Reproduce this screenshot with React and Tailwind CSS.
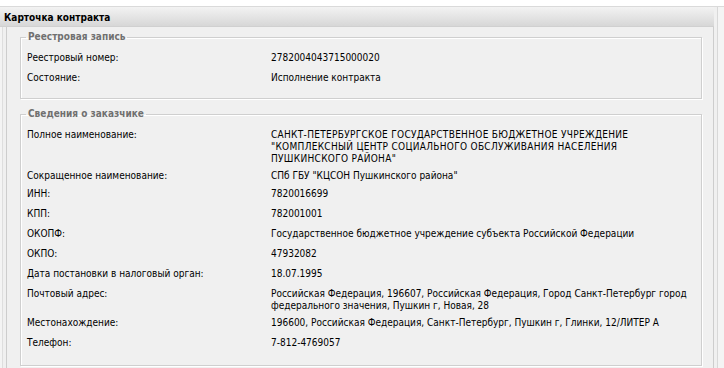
import React from "react";

function Row({ label, children, cls = "py-[4px]" }) {
  return (
    <div className={"flex pl-[6px] leading-[12px] " + cls}>
      <div className="w-[244px] shrink-0 whitespace-nowrap">{label}</div>
      <div className="flex-1 whitespace-nowrap">{children}</div>
    </div>
  );
}

function Box({ title, children, cls }) {
  return (
    <fieldset
      className={
        "ml-[13px] mr-[11px] border border-[#cfcfcf] shadow-[inset_1px_1px_0_#ffffff,1px_1px_0_#ffffff] " +
        cls
      }
    >
      <legend className="ml-[5px] px-[2px] font-bold leading-[12px] text-[#707070]">
        {title}
      </legend>
      {children}
    </fieldset>
  );
}

export default function App() {
  return (
    <div className="w-[724px] h-[368px] overflow-hidden bg-white font-['DejaVu_Sans_Condensed','Liberation_Sans',sans-serif] text-[10px] text-black">
      <div className="h-[6px] bg-white" />
      <div className="border-t border-[#dadada] flex h-[362px]">
        <div className="w-[714px] flex flex-col">
          <div className="h-[20px] flex items-center pt-[1px] pl-[4px] font-bold bg-gradient-to-b from-[#f3f3f3] to-[#d7d7d7] border-b border-[#d0d0d0]">
            Карточка контракта
          </div>
          <div className="flex-1 flex">
            <div className="w-[2px] bg-[#f4f4f4]" />
            <div className="w-[4px] border-l border-[#dedede] bg-[#f0f0f0]" />
            <div className="flex-1 border-l border-r border-[#cdcdcd] bg-[#f0f0f0] pt-[4px]">
              <Box title="Реестровая запись" cls="pt-[5px] pb-[10px]">
                <Row label="Реестровый номер:">2782004043715000020</Row>
                <Row label="Состояние:">Исполнение контракта</Row>
              </Box>
              <Box title="Сведения о заказчике" cls="mt-[9px] pt-[5px] pb-[12px]">
                <Row label="Полное наименование:" cls="pt-[4px] pb-[1px]">
                  <div className="tracking-[0.3px]">
                    САНКТ-ПЕТЕРБУРГСКОЕ ГОСУДАРСТВЕННОЕ БЮДЖЕТНОЕ УЧРЕЖДЕНИЕ
                    <br />
                    "КОМПЛЕКСНЫЙ ЦЕНТР СОЦИАЛЬНОГО ОБСЛУЖИВАНИЯ НАСЕЛЕНИЯ
                    <br />
                    ПУШКИНСКОГО РАЙОНА"
                  </div>
                </Row>
                <Row label="Сокращенное наименование:" cls="pt-[4px] pb-[2px]">
                  СПб ГБУ "КЦСОН Пушкинского района"
                </Row>
                <Row label="ИНН:">7820016699</Row>
                <Row label="КПП:">782001001</Row>
                <Row label="ОКОПФ:">
                  Государственное бюджетное учреждение субъекта Российской Федерации
                </Row>
                <Row label="ОКПО:">47932082</Row>
                <Row label="Дата постановки в налоговый орган:">18.07.1995</Row>
                <Row label="Почтовый адрес:" cls="pt-[4px] pb-[1px]">
                  Российская Федерация, 196607, Российская Федерация, Город Санкт-Петербург город
                  <br />
                  федерального значения, Пушкин г, Новая, 28
                </Row>
                <Row label="Местонахождение:">
                  196600, Российская Федерация, Санкт-Петербург, Пушкин г, Глинки, 12/ЛИТЕР А
                </Row>
                <Row label="Телефон:">7-812-4769057</Row>
              </Box>
            </div>
          </div>
        </div>
        <div className="flex-1 flex bg-[#f4f4f4]">
          <div className="w-[3px] bg-[#f0f0f0]" />
          <div className="w-[1px] bg-[#d8d8d8]" />
        </div>
      </div>
    </div>
  );
}
